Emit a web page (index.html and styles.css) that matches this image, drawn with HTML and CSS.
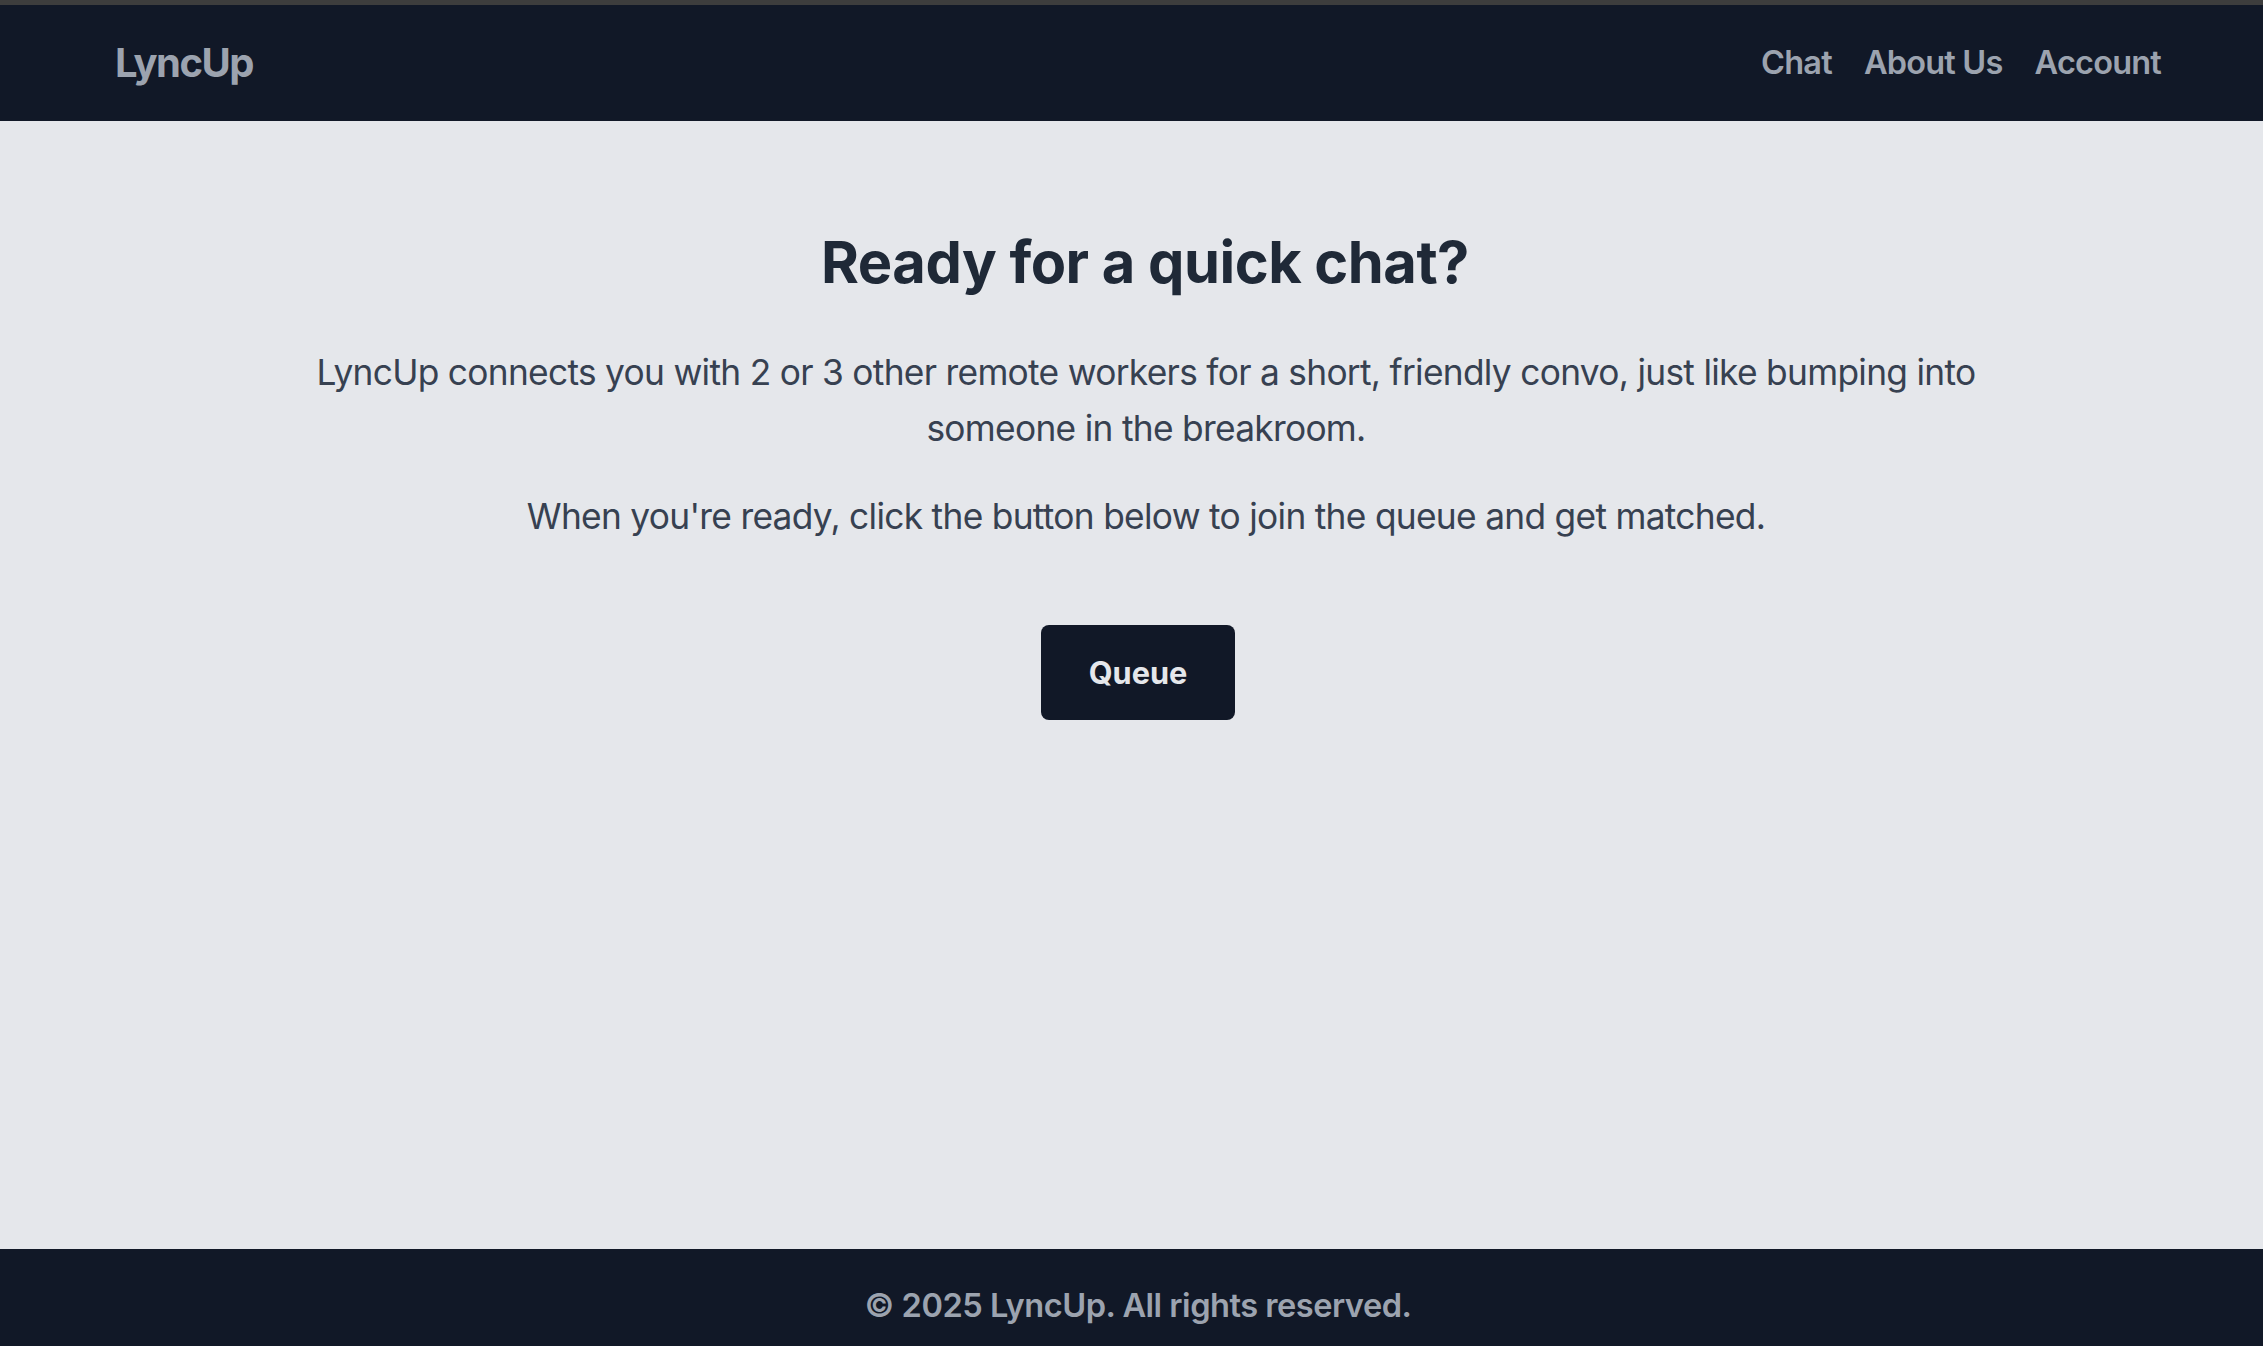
FILE: index.html
```html
<!DOCTYPE html>
<html lang="en">
<head>
<meta charset="utf-8">
<title>LyncUp</title>
<link rel="stylesheet" href="styles.css">
</head>
<body>
<div class="page">
  <header class="site-header">
    <a class="logo" href="#">LyncUp</a>
    <nav class="nav">
      <a href="#">Chat</a>
      <a href="#">About Us</a>
      <a href="#">Account</a>
    </nav>
  </header>
  <main class="main">
    <h1 class="title">Ready for a quick chat?</h1>
    <p class="lead">LyncUp connects you with 2 or 3 other remote workers for a short, friendly convo, just like bumping into someone in the breakroom.</p>
    <p class="lead">When you're ready, click the button below to join the queue and get matched.</p>
    <button class="queue-btn" type="button">Queue</button>
  </main>
  <footer class="site-footer">
    <p>&copy; 2025 LyncUp. All rights reserved.</p>
  </footer>
</div>
</body>
</html>
```
FILE: styles.css
```css
* { box-sizing: border-box; }
html, body { margin: 0; padding: 0; }
body {
  font-family: Inter, "Noto Sans", "Liberation Sans", sans-serif;
  background: #e5e7eb;
  overflow: hidden;
}
.page {
  display: flex;
  flex-direction: column;
  height: 1346px;
  border-top: 5px solid #3d3d3d;
}
.site-header {
  height: 116px;
  flex: none;
  background: #111827;
  display: flex;
  align-items: center;
  justify-content: space-between;
  padding: 0 102px 0 115px;
}
.logo {
  color: #9ca3af;
  font-weight: 700;
  font-size: 40px;
  line-height: 54px;
  text-decoration: none;
  letter-spacing: -1.5px;
}
.nav {
  display: flex;
  gap: 32px;
}
.nav a {
  color: #9ca3af;
  font-weight: 600;
  font-size: 32.5px;
  line-height: 48px;
  text-decoration: none;
  letter-spacing: -0.8px;
}
.main {
  flex: 1;
  display: flex;
  flex-direction: column;
  align-items: center;
  padding: 105px 0 0 13px;
}
.title {
  margin: 0;
  padding-left: 14px;
  color: #1f2937;
  font-weight: 700;
  font-size: 57.8px;
  line-height: 72px;
  letter-spacing: -0.5px;
}
.lead {
  margin: 32px 0 0;
  max-width: 1792px;
  padding-left: 16px;
  color: #374151;
  font-size: 35.3px;
  line-height: 56px;
  letter-spacing: -0.7px;
  text-align: center;
}
.title + .lead { margin-top: 47px; }
.queue-btn {
  margin-top: 80px;
  background: #111827;
  color: #e5e7eb;
  border: 0;
  border-radius: 8px;
  font-family: inherit;
  font-weight: 700;
  font-size: 30.7px;
  line-height: 46px;
  padding: 24.5px 48px;
  cursor: pointer;
}
.site-footer {
  flex: none;
  height: 97px;
  background: #111827;
  padding: 32px 0 0 13px;
  text-align: center;
}
.site-footer p {
  margin: 0;
  color: #9ca3af;
  font-weight: 600;
  font-size: 32.6px;
  line-height: 48px;
  letter-spacing: -0.5px;
}
```
